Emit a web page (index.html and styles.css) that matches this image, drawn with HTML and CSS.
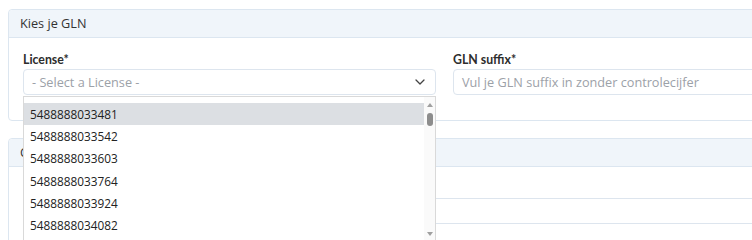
FILE: index.html
```html
<!DOCTYPE html>
<html lang="nl">
<head>
<meta charset="utf-8">
<title>Kies je GLN</title>
<link rel="stylesheet" href="styles.css">
</head>
<body>
<div class="page">
  <section class="card">
    <div class="card-header">Kies je GLN</div>
    <div class="card-body grid">
      <div class="field">
        <label class="label">License*</label>
        <div class="select-wrap">
          <div class="control select">
            <span class="placeholder">- Select a License -</span>
            <svg class="chevron" width="10" height="6" viewBox="0 0 10 6"><path d="M1 1l4 4 4-4" fill="none" stroke="#444" stroke-width="1.3" stroke-linecap="round" stroke-linejoin="round"/></svg>
          </div>
          <div class="dropdown">
            <ul class="options">
              <li class="option active">5488888033481</li>
              <li class="option">5488888033542</li>
              <li class="option">5488888033603</li>
              <li class="option">5488888033764</li>
              <li class="option">5488888033924</li>
              <li class="option">5488888034082</li>
            </ul>
            <div class="scrollbar">
              <span class="arrow up"></span>
              <span class="thumb"></span>
              <span class="track"></span>
              <span class="arrow down"></span>
            </div>
          </div>
        </div>
      </div>
      <div class="field">
        <label class="label">GLN suffix*</label>
        <div class="control">
          <span class="placeholder">Vul je GLN suffix in zonder controlecijfer</span>
        </div>
      </div>
    </div>
  </section>
  <section class="card second">
    <div class="card-header">C</div>
    <div class="card-body">
      <div class="label-space"></div>
      <div class="control"></div>
    </div>
  </section>
</div>
</body>
</html>
```
FILE: styles.css
```css
html, body {
  overflow: hidden;
}
body {
  margin: 0;
  font-family: "Open Sans", Lato, sans-serif;
  font-size: 12.7px;
  color: #2b2b2b;
  background: #fff;
}
.page {
  padding: 9px 0 0 8px;
  width: 873px;
}
.card {
  border: 1px solid #dce6f0;
  border-radius: 4px;
  background: #fff;
}
.card.second {
  margin-top: 17px;
}
.card-header {
  background: #f0f5fa;
  border-bottom: 1px solid #dce6f0;
  border-radius: 4px 4px 0 0;
  padding: 4px 11px 5px;
  line-height: 18px;
  color: #333;
}
.card-body {
  padding: 13px 14px 25px;
}
.grid {
  display: grid;
  grid-template-columns: 413px 413px;
  column-gap: 17px;
}
.label {
  display: block;
  font-family: Lato, "Open Sans", sans-serif;
  font-size: 12.3px;
  font-weight: 700;
  line-height: 18px;
  color: #2d2d2d;
}
.label-space {
  height: 18px;
}
.control {
  box-sizing: border-box;
  height: 26px;
  border: 1px solid #dde5ee;
  border-radius: 4px;
  padding: 0 8px;
  display: flex;
  align-items: center;
  background: #fff;
}
.placeholder {
  color: #9ca1a8;
}
.select {
  justify-content: space-between;
}
.chevron {
  margin-right: 2px;
}
.select-wrap {
  position: relative;
}
.dropdown {
  position: absolute;
  top: 27px;
  left: 0;
  width: 413px;
  height: 145px;
  box-sizing: border-box;
  border: 1px solid #d9d9d9;
  background: #fff;
  display: flex;
  z-index: 5;
}
.options {
  list-style: none;
  margin: 0;
  padding: 5.5px 0 0;
  flex: 1;
  overflow: hidden;
}
.option {
  height: 22.4px;
  line-height: 22.4px;
  padding-left: 6px;
  font-size: 11.8px;
  color: #222;
}
.option.active {
  background: #dcdfe3;
}
.scrollbar {
  width: 11px;
  background: #fafafa;
  display: flex;
  flex-direction: column;
  align-items: center;
}
.arrow {
  width: 0;
  height: 0;
  border-left: 3.5px solid transparent;
  border-right: 3.5px solid transparent;
}
.arrow.up {
  margin-top: 6px;
  border-bottom: 4px solid #a0a0a0;
}
.arrow.down {
  margin-bottom: 4px;
  border-top: 4px solid #a0a0a0;
}
.thumb {
  margin-top: 6px;
  width: 6px;
  height: 13px;
  border-radius: 3px;
  background: #8d8d8d;
}
.track {
  flex: 1;
}
```
